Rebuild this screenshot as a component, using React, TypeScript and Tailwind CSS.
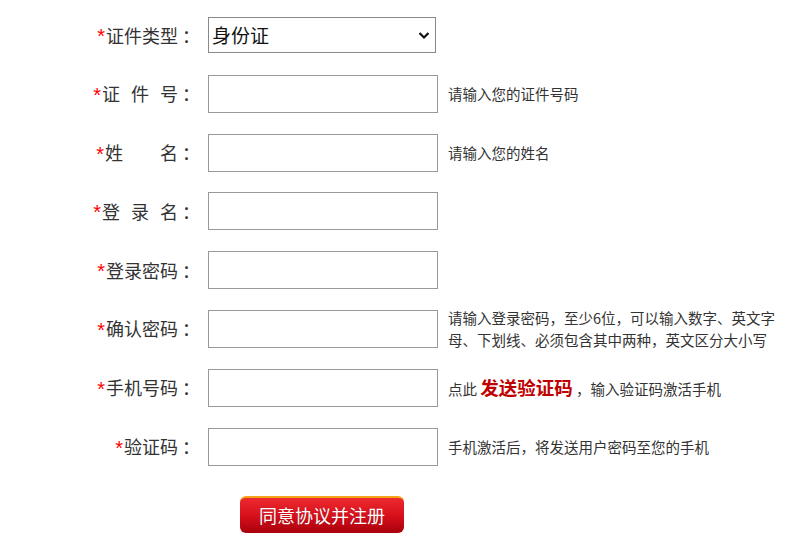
import React from "react";

const FONT = '"Microsoft YaHei", "Noto Sans CJK SC", "Noto Sans", sans-serif';

function Star() {
  return (
    <span
      className="text-[#ff0000] text-[20px] leading-none mr-[1px] relative top-[1px]"
      style={{ fontFamily: '"Liberation Sans", Arial, sans-serif' }}
    >
      *
    </span>
  );
}

function Label({ chars, gap }: { chars: string[]; gap: number }) {
  return (
    <div className="w-[208px] shrink-0 flex items-center justify-end pr-[8px] text-[18px] text-[#333]">
      <Star />
      {chars.map((c, i) => (
        <span key={i} style={{ marginRight: i < chars.length - 1 ? gap : 0 }}>
          {c}
        </span>
      ))}
      <span className="ml-[4px]">：</span>
    </div>
  );
}

function Input() {
  return <div className="w-[230px] h-[38px] border border-[#999] bg-white shrink-0" />;
}

function Hint({ children }: { children: React.ReactNode }) {
  return <div className="ml-[10px] text-[14.5px] leading-[22px] text-[#333]">{children}</div>;
}

export default function App() {
  return (
    <div className="w-[800px] h-[550px] bg-white overflow-hidden" style={{ fontFamily: FONT }}>
      <div className="pt-[16px] flex flex-col gap-[20.8px]">
        <div className="flex items-center h-[38px]">
          <Label chars={["证", "件", "类", "型"]} gap={0} />
          <div className="relative w-[228px] h-[36px] border border-[#8a8a8a] bg-white flex items-center pl-[3px] text-[19px] text-[#111]">
            身份证
            <svg className="absolute right-[5px] top-[13px]" width="12" height="9" viewBox="0 0 12 9">
              <path d="M1.5 2 L6 6.5 L10.5 2" stroke="#111" strokeWidth="2.2" fill="none" />
            </svg>
          </div>
        </div>
        <div className="flex items-center h-[38px]">
          <Label chars={["证", "件", "号"]} gap={11} />
          <Input />
          <Hint>请输入您的证件号码</Hint>
        </div>
        <div className="flex items-center h-[38px]">
          <Label chars={["姓", "名"]} gap={37} />
          <Input />
          <Hint>请输入您的姓名</Hint>
        </div>
        <div className="flex items-center h-[38px]">
          <Label chars={["登", "录", "名"]} gap={11} />
          <Input />
        </div>
        <div className="flex items-center h-[38px]">
          <Label chars={["登", "录", "密", "码"]} gap={0} />
          <Input />
        </div>
        <div className="flex items-center h-[38px]">
          <Label chars={["确", "认", "密", "码"]} gap={0} />
          <Input />
          <Hint>
            <div className="w-[345px]">
              请输入登录密码，至少6位，可以输入数字、英文字
              <br />
              母、下划线、必须包含其中两种，英文区分大小写
            </div>
          </Hint>
        </div>
        <div className="flex items-center h-[38px]">
          <Label chars={["手", "机", "号", "码"]} gap={0} />
          <Input />
          <Hint>
            <span>点此 </span>
            <span className="text-[18.5px] font-bold text-[#c00000]">发送验证码</span>
            <span> ，输入验证码激活手机</span>
          </Hint>
        </div>
        <div className="flex items-center h-[38px]">
          <Label chars={["验", "证", "码"]} gap={0} />
          <Input />
          <Hint>手机激活后，将发送用户密码至您的手机</Hint>
        </div>
      </div>
      <div className="pl-[240px] pt-[30px]">
        <button
          className="w-[164px] h-[37px] rounded-[6px] border-t-2 border-[#f7a21b] text-white text-[18px] flex items-center justify-center"
          style={{ background: "linear-gradient(#ec2a2f, #d8101c 50%, #a8000c)", textShadow: "0 0 1px rgba(0,0,0,0.3)" }}
        >
          同意协议并注册
        </button>
      </div>
    </div>
  );
}
